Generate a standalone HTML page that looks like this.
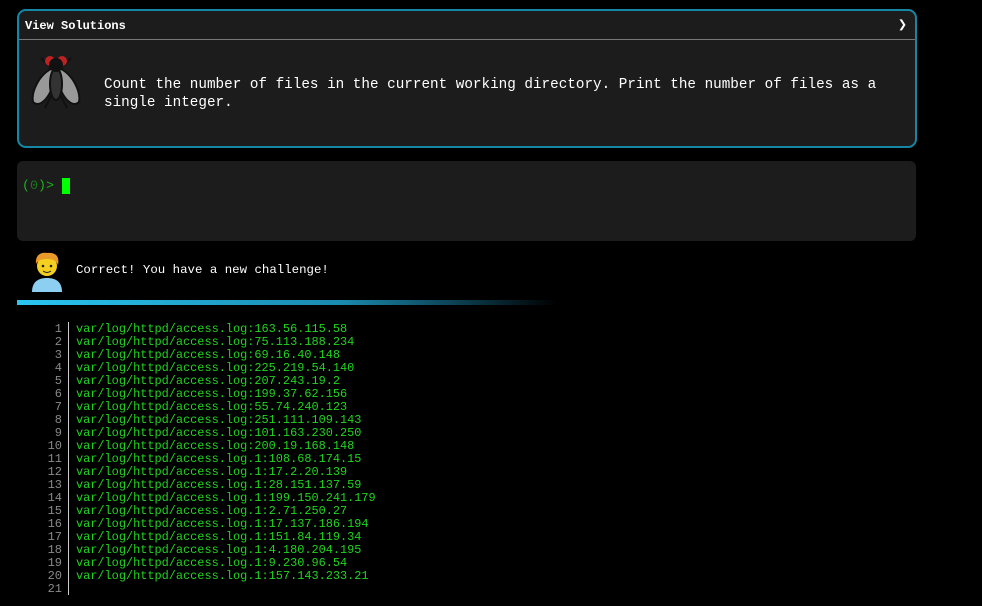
<!DOCTYPE html><html><head><style>
body{margin:0;background:#000;width:982px;height:606px;overflow:hidden;font-family:"Liberation Mono",monospace;position:relative}
.p{position:absolute;left:17px;top:9px;width:896px;height:135px;border:2px solid #1686a6;border-radius:9px;background:#1c1c1c}
.h{height:28px;border-bottom:1px solid #777;color:#fff;font-weight:bold;font-size:12px;line-height:30px;padding-left:6px;position:relative}
.h span{position:absolute;right:8px;top:0;font-size:15px;font-weight:bold}
.q{position:absolute;left:85px;top:65px;color:#fff;font-size:14.3px;line-height:18px;width:800px}
.t{position:absolute;left:17px;top:161px;width:899px;height:80px;background:#1c1c1c;border-radius:6px}
.pr{position:absolute;left:5px;top:17px;color:#19b319;font-size:13.3px}
.cur{position:absolute;left:45px;top:17px;width:8px;height:16px;background:#0f0}
.c{position:absolute;left:76px;top:263px;color:#fff;font-size:12.4px}
.bar{position:absolute;left:17px;top:300px;width:540px;height:5px;background:linear-gradient(90deg,#2ac6f2,#1a8ab0 60%,rgba(0,0,0,0))}
.ln{position:absolute;left:30px;top:323px;width:32px;text-align:right;color:#8a8a8a;font-size:12px;line-height:13px}
.vl{position:absolute;left:68px;top:322px;width:1px;height:273px;background:#ccc}
.lg{position:absolute;left:76px;top:323px;color:#1fd51f;font-size:11.9px;line-height:13px;white-space:pre}
</style></head><body>
<div class="p"><div class="h">View Solutions<span>❯</span></div>
<svg style="position:absolute;left:10px;top:41px" width="54" height="58" viewBox="0 0 54 58">
<g stroke="#111" stroke-width="2" fill="none"><path d="M20 14 L12 6 M34 14 L42 6 M18 34 L6 44 M36 34 L48 44 M22 44 L16 56 M32 44 L38 56"/></g>
<path d="M24 16 C10 22 2 40 4 50 C10 56 20 48 25 30 Z" fill="#999" stroke="#111" stroke-width="2"/>
<path d="M30 16 C44 22 52 40 50 50 C44 56 34 48 29 30 Z" fill="#999" stroke="#111" stroke-width="2"/>
<ellipse cx="27" cy="32" rx="6" ry="16" fill="#333" stroke="#111" stroke-width="2"/>
<circle cx="21" cy="9" r="5" fill="#b22"/><circle cx="33" cy="9" r="5" fill="#b22"/>
<circle cx="27" cy="13" r="7" fill="#111"/></svg>
<div class="q">Count the number of files in the current working directory. Print the number of files as a single integer.</div></div>
<div class="t"><div class="pr">(<span style="color:#157a15">0</span>)&gt;</div><div class="cur"></div></div>
<svg style="position:absolute;left:30px;top:250px" width="34" height="42" viewBox="0 0 34 42">
<path d="M2 42 C2 32 8 28 17 28 C26 28 32 32 32 42Z" fill="#8ccff0"/>
<circle cx="17" cy="16" r="10" fill="#f5d020"/>
<path d="M6 14 C5 4 12 2 17 3 C24 2 30 5 28 15 C26 10 22 9 17 9 C12 9 8 10 6 14Z" fill="#e89a2a"/>
<circle cx="13" cy="16" r="1.3" fill="#222"/><circle cx="21" cy="16" r="1.3" fill="#222"/>
<path d="M13 21 Q17 24 21 21" stroke="#222" fill="none"/></svg>
<div class="c">Correct! You have a new challenge!</div>
<div class="bar"></div>
<div class="ln">1<br>2<br>3<br>4<br>5<br>6<br>7<br>8<br>9<br>10<br>11<br>12<br>13<br>14<br>15<br>16<br>17<br>18<br>19<br>20<br>21</div>
<div class="vl"></div>
<div class="lg">var/log/httpd/access.log:163.56.115.58
var/log/httpd/access.log:75.113.188.234
var/log/httpd/access.log:69.16.40.148
var/log/httpd/access.log:225.219.54.140
var/log/httpd/access.log:207.243.19.2
var/log/httpd/access.log:199.37.62.156
var/log/httpd/access.log:55.74.240.123
var/log/httpd/access.log:251.111.109.143
var/log/httpd/access.log:101.163.230.250
var/log/httpd/access.log:200.19.168.148
var/log/httpd/access.log.1:108.68.174.15
var/log/httpd/access.log.1:17.2.20.139
var/log/httpd/access.log.1:28.151.137.59
var/log/httpd/access.log.1:199.150.241.179
var/log/httpd/access.log.1:2.71.250.27
var/log/httpd/access.log.1:17.137.186.194
var/log/httpd/access.log.1:151.84.119.34
var/log/httpd/access.log.1:4.180.204.195
var/log/httpd/access.log.1:9.230.96.54
var/log/httpd/access.log.1:157.143.233.21</div>
</body></html>
